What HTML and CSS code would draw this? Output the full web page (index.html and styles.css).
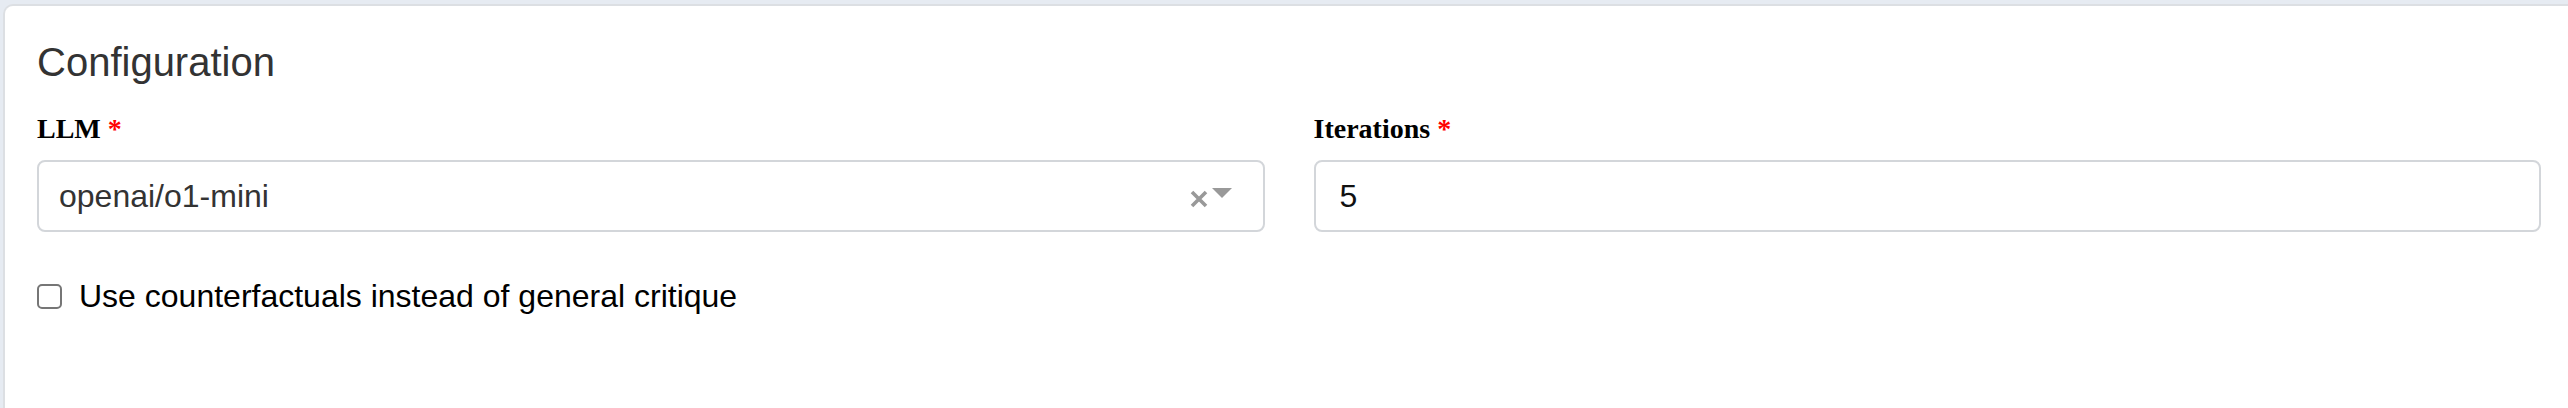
FILE: index.html
```html
<!DOCTYPE html>
<html lang="en">
<head>
<meta charset="utf-8">
<title>Configuration</title>
<link rel="stylesheet" href="styles.css">
</head>
<body>
<div class="card">
  <h5 class="card-title">Configuration</h5>
  <div class="row">
    <div class="field">
      <label class="field-label">LLM <span class="req">*</span></label>
      <div class="select">
        <span class="select-value">openai/o1-mini</span>
        <span class="select-controls">
          <svg class="clear" width="18" height="18" viewBox="0 0 18 18" aria-hidden="true">
            <path d="M2 2 L16 16 M16 2 L2 16" stroke="#999" stroke-width="3.6" fill="none"/>
          </svg>
          <span class="arrow"></span>
        </span>
      </div>
    </div>
    <div class="field">
      <label class="field-label">Iterations <span class="req">*</span></label>
      <div class="input">5</div>
    </div>
  </div>
  <div class="check-row">
    <span class="checkbox"></span>
    <span class="check-label">Use counterfactuals instead of general critique</span>
  </div>
</div>
</body>
</html>
```

FILE: styles.css
```css
html, body {
  margin: 0;
  padding: 0;
}
body {
  background: #e6ebf2;
  width: 2568px;
  height: 408px;
  overflow: hidden;
  padding: 4px 0 0 3px;
  box-sizing: border-box;
  font-family: "Liberation Sans", Arial, sans-serif;
}
.card {
  box-sizing: border-box;
  width: 2565px;
  height: 404px;
  background: #fff;
  border: 2px solid #dcdfe3;
  border-right: 0;
  border-bottom: 0;
  border-radius: 10px 0 0 0;
  padding: 32px 27px 0 32px;
}
.card-title {
  margin: 0 0 27px 0;
  font-family: "Liberation Sans", Arial, sans-serif;
  font-weight: 400;
  font-size: 40px;
  line-height: 48px;
  color: #333;
}
.row {
  display: grid;
  grid-template-columns: 1fr 1fr;
  column-gap: 49px;
}
.field {
  display: flex;
  flex-direction: column;
}
.field-label {
  display: block;
  font-family: "Liberation Serif", "Times New Roman", serif;
  font-weight: 700;
  font-size: 28px;
  line-height: 32px;
  margin-bottom: 15px;
  color: #000;
}
.req {
  color: #f00;
}
.select, .input {
  box-sizing: border-box;
  height: 72px;
  border: 2px solid #d3d6da;
  border-radius: 8px;
  background: #fff;
  display: flex;
  align-items: center;
  font-size: 32px;
}
.select {
  padding: 0 31px 0 20px;
  justify-content: space-between;
}
.select-value {
  color: #333;
  line-height: 40px;
}
.select-controls {
  display: flex;
  align-items: center;
  gap: 4px;
  margin-top: 3px;
}
.clear {
  display: block;
  margin-top: 2px;
}
.arrow {
  display: block;
  width: 0;
  height: 0;
  border-style: solid;
  border-width: 10px 10px 0 10px;
  border-color: #999 transparent transparent transparent;
  margin-top: -10px;
}
.input {
  padding: 0 24px;
  color: #111;
  line-height: 40px;
}
.check-row {
  display: flex;
  align-items: center;
  height: 48px;
  margin-top: 40px;
}
.checkbox {
  box-sizing: border-box;
  width: 25px;
  height: 25px;
  border: 2px solid #767676;
  border-radius: 5px;
  background: #fff;
  margin-right: 17px;
  flex: none;
}
.check-label {
  font-size: 32px;
  line-height: 48px;
  color: #000;
}
```
